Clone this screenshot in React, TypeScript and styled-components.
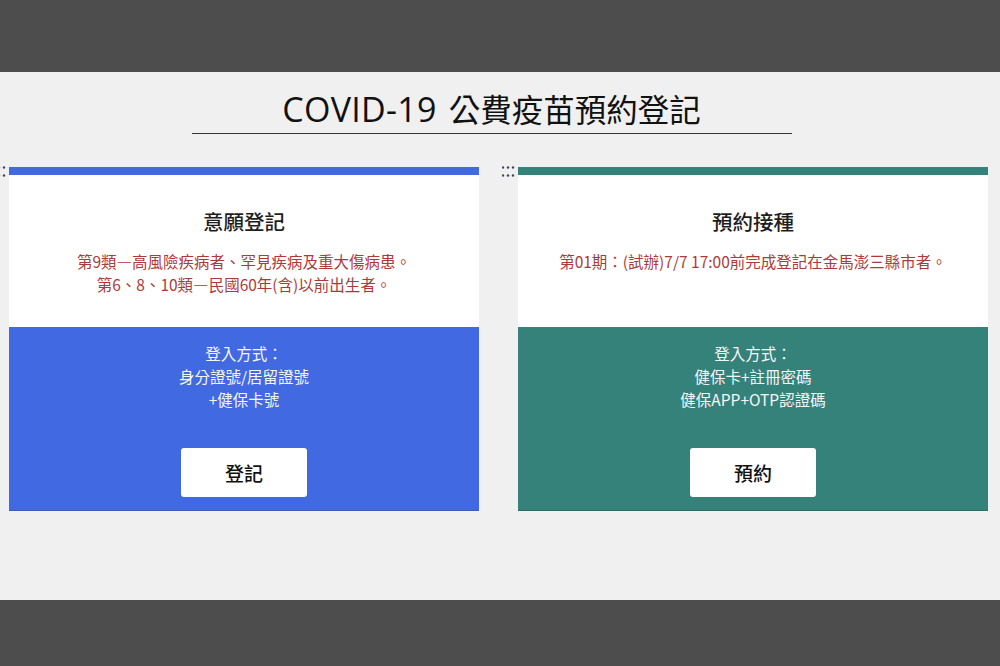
import React from "react";
import styled, { createGlobalStyle } from "styled-components";

const Global = createGlobalStyle`
  html, body { margin: 0; padding: 0; }
  body {
    background: #4d4d4d;
    font-family: "Open Sans", "Noto Sans CJK TC", sans-serif;
    overflow: hidden;
  }
`;

const Page = styled.main`
  margin-top: 72px;
  height: 528px;
  background: #f0f0f0;
  overflow: hidden;
  display: flex;
  flex-direction: column;
  align-items: center;
`;

const Heading = styled.h1`
  margin: 16px 0 0 -17px;
  width: 600px;
  padding-bottom: 4px;
  border-bottom: 1px solid #333;
  text-align: center;
  font-family: "Noto Sans CJK TC", sans-serif;
  font-size: 31.5px;
  font-weight: 400;
  line-height: 40px;
  color: #111;
`;

const Latin = styled.span`
  font-family: "Open Sans", sans-serif;
  font-size: 34px;
  font-weight: 500;
  margin-right: 5px;
  letter-spacing: 0.3px;
`;

const Cards = styled.div`
  align-self: stretch;
  display: grid;
  grid-template-columns: 470px 470px;
  column-gap: 39px;
  padding-left: 9px;
  margin-top: 33px;
`;

const Card = styled.section<{ $c: string }>`
  position: relative;
  display: flex;
  flex-direction: column;
  border-top: 8px solid ${(p) => p.$c};
`;

const Handle = styled.svg`
  position: absolute;
  left: -16px;
  top: -9px;
  width: 13px;
  height: 11px;
`;

const Top = styled.div`
  background: #fff;
  height: 152px;
  box-sizing: border-box;
  padding-top: 31px;
  text-align: center;
`;

const CardTitle = styled.h2`
  margin: 0;
  font-family: "Noto Sans CJK TC", sans-serif;
  font-size: 20.5px;
  font-weight: 500;
  line-height: 30px;
  color: #1e1e1e;
`;

const Note = styled.p`
  margin: 14px 0 0;
  font-family: "Noto Sans CJK TC", sans-serif;
  font-size: 15.5px;
  line-height: 23px;
  color: #ad3a3a;
`;

const Dash = styled.span`
  font-feature-settings: "fwid";
`;

const Bottom = styled.div<{ $c: string; $edge: string }>`
  background: ${(p) => p.$c};
  height: 184px;
  box-sizing: border-box;
  padding-top: 15px;
  border-bottom: 1px solid ${(p) => p.$edge};
  display: flex;
  flex-direction: column;
  align-items: center;
`;

const Login = styled.p`
  margin: 0;
  font-family: "Noto Sans CJK TC", sans-serif;
  font-size: 15.5px;
  line-height: 23px;
  color: #f6f6f6;
  text-align: center;
  height: 69px;
`;

const Button = styled.button`
  margin-top: 37px;
  width: 126px;
  height: 49px;
  border: none;
  border-radius: 3px;
  background: #fff;
  font-family: "Noto Sans CJK TC", sans-serif;
  font-size: 19px;
  font-weight: 500;
  color: #111;
  cursor: pointer;
`;

const Dots = () => (
  <Handle viewBox="0 0 13 11">
    {[0, 8].map((y) =>
      [1, 6, 11].map((x) => (
        <circle key={`${x}-${y}`} cx={x} cy={y + 1.5} r={1.2} fill="#3b4a5a" />
      ))
    )}
  </Handle>
);

const cards = [
  {
    color: "#4169e1",
    edge: "#3a5cc4",
    title: "意願登記",
    notes: ["第9類—高風險疾病者、罕見疾病及重大傷病患。", "第6、8、10類—民國60年(含)以前出生者。"],
    login: ["登入方式：", "身分證號/居留證號", "+健保卡號"],
    button: "登記",
  },
  {
    color: "#35827a",
    edge: "#2d6d66",
    title: "預約接種",
    notes: ["第01期：(試辦)7/7 17:00前完成登記在金馬澎三縣市者。"],
    login: ["登入方式：", "健保卡+註冊密碼", "健保APP+OTP認證碼"],
    button: "預約",
  },
];

const withDash = (s: string) =>
  s.split("—").map((part, i) => (
    <React.Fragment key={i}>
      {i > 0 && <Dash>—</Dash>}
      {part}
    </React.Fragment>
  ));

const Lines = ({ items }: { items: string[] }) => (
  <>
    {items.map((n, i) => (
      <React.Fragment key={i}>
        {i > 0 && <br />}
        {withDash(n)}
      </React.Fragment>
    ))}
  </>
);

export default function App() {
  return (
    <>
      <Global />
      <Page lang="zh-Hant-TW">
        <Heading>
          <Latin>COVID-19</Latin> 公費疫苗預約登記
        </Heading>
        <Cards>
          {cards.map((c) => (
            <Card key={c.title} $c={c.color}>
              <Dots />
              <Top>
                <CardTitle>{c.title}</CardTitle>
                <Note>
                  <Lines items={c.notes} />
                </Note>
              </Top>
              <Bottom $c={c.color} $edge={c.edge}>
                <Login>
                  <Lines items={c.login} />
                </Login>
                <Button>{c.button}</Button>
              </Bottom>
            </Card>
          ))}
        </Cards>
      </Page>
    </>
  );
}
